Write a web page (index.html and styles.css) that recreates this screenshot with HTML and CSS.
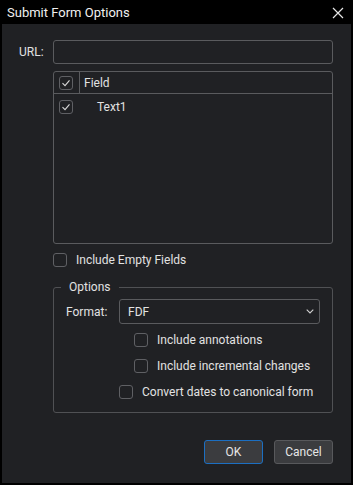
FILE: index.html
```html
<!DOCTYPE html>
<html>
<head>
<meta charset="utf-8">
<link rel="stylesheet" href="styles.css">
</head>
<body>
<div class="window">
  <div class="titlebar">
    <span class="title">Submit Form Options</span>
    <svg class="close" width="12" height="12" viewBox="0 0 12 12"><path d="M1 1L11 11M11 1L1 11" stroke="#e6e6e6" stroke-width="1.2" fill="none"/></svg>
  </div>
  <div class="content">
    <div class="url-row">
      <label class="url-label">URL:</label>
      <div class="input"></div>
    </div>
    <div class="indent">
      <div class="list">
        <div class="list-head">
          <div class="head-check"><span class="cb checked"><svg width="12" height="12" viewBox="0 0 12 12"><path d="M2.5 6.2L5 8.7L9.5 3.3" stroke="#d8d8d8" stroke-width="1.1" fill="none"/></svg></span></div>
          <div class="head-field">Field</div>
        </div>
        <div class="list-row">
          <span class="cb checked"><svg width="12" height="12" viewBox="0 0 12 12"><path d="M2.5 6.2L5 8.7L9.5 3.3" stroke="#d8d8d8" stroke-width="1.1" fill="none"/></svg></span>
          <span class="row-text">Text1</span>
        </div>
      </div>
      <div class="check-line empty">
        <span class="cb"></span><span>Include Empty Fields</span>
      </div>
      <fieldset class="group">
        <legend>Options</legend>
        <div class="format-row">
          <span class="format-label">Format:</span>
          <div class="combo">
            <span>FDF</span>
            <svg width="8" height="5" viewBox="0 0 8 5"><path d="M0.7 0.7L4 4L7.3 0.7" stroke="#d0d0d0" stroke-width="1.1" fill="none"/></svg>
          </div>
        </div>
        <div class="check-line sub">
          <span class="cb"></span><span>Include annotations</span>
        </div>
        <div class="check-line sub">
          <span class="cb"></span><span>Include incremental changes</span>
        </div>
        <div class="check-line conv">
          <span class="cb"></span><span>Convert dates to canonical form</span>
        </div>
      </fieldset>
      <div class="buttons">
        <button class="btn ok">OK</button>
        <button class="btn">Cancel</button>
      </div>
    </div>
  </div>
</div>
</body>
</html>
```

FILE: styles.css
```css
html, body {
  margin: 0;
  padding: 0;
  background: #000;
}
body {
  font-family: Roboto, "Noto Sans", sans-serif;
  font-size: 12px;
  color: #e2e2e2;
}
.window {
  width: 353px;
  height: 485px;
  display: flex;
  flex-direction: column;
  box-sizing: border-box;
}
.titlebar {
  height: 24px;
  flex: none;
  display: flex;
  align-items: center;
  justify-content: space-between;
  padding: 0 9px 0 7px;
}
.title {
  font-size: 13px;
  color: #f0f0f0;
  margin-top: 1px;
}
.close {
  display: block;
  margin-top: 1px;
}
.content {
  flex: 1;
  margin: 0 2px 2px 2px;
  background: #202124;
  padding: 16px 18px 0 17px;
  box-sizing: border-box;
}
.url-row {
  display: flex;
  align-items: center;
}
.url-label {
  width: 34px;
  flex: none;
}
.input {
  flex: 1;
  height: 22px;
  border: 1px solid #5a5b5e;
  border-radius: 3px;
  background: #202124;
}
.indent {
  margin-left: 34px;
}
.list {
  margin-top: 7px;
  height: 173px;
  border: 1px solid #5a5b5e;
  border-radius: 3px;
  box-sizing: border-box;
}
.list-head {
  display: flex;
  height: 21px;
  border-bottom: 1px solid #5a5b5e;
}
.head-check {
  width: 26px;
  border-right: 1px solid #5a5b5e;
  display: flex;
  align-items: center;
  padding-left: 5px;
  box-sizing: border-box;
}
.head-field {
  padding-left: 4px;
  display: flex;
  align-items: center;
}
.list-row {
  display: flex;
  align-items: center;
  padding-left: 5px;
  margin-top: 5px;
  height: 15px;
}
.row-text {
  margin-left: 24px;
}
.cb {
  width: 14px;
  height: 14px;
  border: 1px solid #5f6064;
  border-radius: 3px;
  box-sizing: border-box;
  display: inline-flex;
  align-items: center;
  justify-content: center;
  flex: none;
}
.cb svg {
  display: block;
}
.check-line {
  display: flex;
  align-items: center;
  gap: 9px;
  height: 14px;
}
.empty {
  margin-top: 9px;
}
.group {
  margin: 13px 0 0 0;
  border: 1px solid #505154;
  border-radius: 3px;
  padding: 4px 12px 13px 12px;
  min-width: 0;
}
.group legend {
  margin-left: -5px;
  padding: 0 8px;
  line-height: 15px;
}
.format-row {
  display: flex;
  align-items: center;
}
.format-label {
  width: 53px;
  flex: none;
}
.combo {
  flex: 1;
  height: 25px;
  box-sizing: border-box;
  border: 1px solid #5a5b5e;
  border-radius: 3px;
  display: flex;
  align-items: center;
  justify-content: space-between;
  padding: 0 5px 0 8px;
}
.sub {
  margin-left: 68px;
  margin-top: 12px;
}
.format-row + .sub {
  margin-top: 9px;
}
.conv {
  margin-left: 53px;
  margin-top: 12px;
}
.buttons {
  display: flex;
  justify-content: flex-end;
  gap: 11px;
  margin-top: 27px;
}
.btn {
  width: 59px;
  height: 24px;
  font-family: Roboto, "Noto Sans", sans-serif;
  font-size: 12px;
  color: #e6e6e6;
  background: #3b3c3f;
  border: 1px solid #58595c;
  border-radius: 3px;
  padding: 0;
}
.btn.ok {
  border-color: #1c6fc2;
}
```
